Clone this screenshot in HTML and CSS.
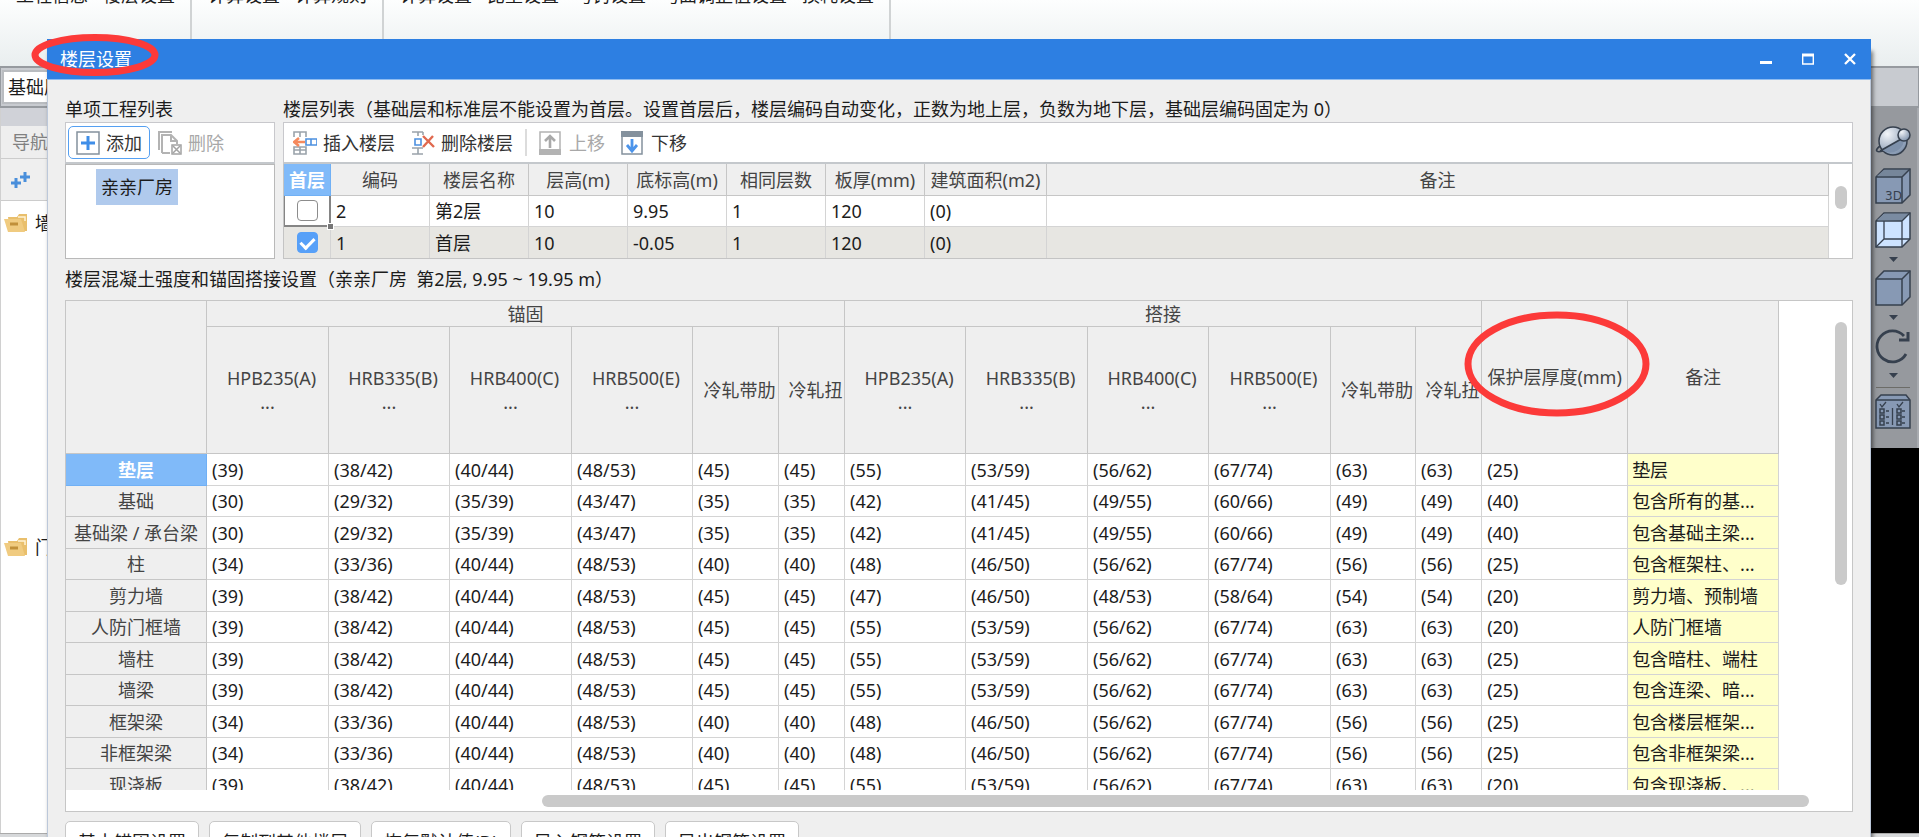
FILE: index.html
```html
<!DOCTYPE html>
<html lang="zh-CN">
<head>
<meta charset="utf-8">
<title>楼层设置</title>
<link rel="stylesheet" href="styles.css">
</head>
<body>
<div class="app">
  <header class="ribbon">
    <div class="ribbon-group"><span>工程信息</span><span>楼层设置</span></div>
    <div class="ribbon-group"><span>计算设置</span><span>计算规则</span></div>
    <div class="ribbon-group"><span>计算设置</span><span>比重设置</span><span>弯钩设置</span><span>弯曲调整值设置</span><span>损耗设置</span></div>
  </header>
  <div class="floor-bar"><button class="floor-select" type="button">基础层</button></div>
  <main class="workspace">
    <aside class="nav">
      <div class="nav-strip"></div>
      <div class="nav-title">导航树</div>
      <div class="nav-tools">
        <svg width="20" height="18" viewBox="0 0 20 18"><path d="M5 7v10M0 12h10M14 1v10M9 6h10" stroke="#4a8fdb" stroke-width="3" fill="none"/></svg>
      </div>
      <div class="nav-tree">
        <div class="nav-item"><svg width="24" height="18" viewBox="0 0 24 18"><path d="M4 3h9l2-3h8v17H6z" fill="#e9bf6c"/><path d="M14 3h7v4" stroke="#fff3d4" stroke-width="1.5" fill="none"/><path d="M0 5h17l4 13H4z" fill="#f0cb80"/><path d="M6 10h8" stroke="#c1903a" stroke-width="3"/></svg><span>墙</span></div>
        <div class="nav-item"><svg width="24" height="18" viewBox="0 0 24 18"><path d="M4 3h9l2-3h8v17H6z" fill="#e9bf6c"/><path d="M14 3h7v4" stroke="#fff3d4" stroke-width="1.5" fill="none"/><path d="M0 5h17l4 13H4z" fill="#f0cb80"/><path d="M6 10h8" stroke="#c1903a" stroke-width="3"/></svg><span>门</span></div>
      </div>
    </aside>
    <aside class="view-tools">
      <svg width="36" height="30" viewBox="0 0 36 30"><defs><radialGradient id="ball" cx=".3" cy=".25" r=".8"><stop offset="0" stop-color="#f2f5f9"/><stop offset="1" stop-color="#8093ad"/></radialGradient></defs><circle cx="18" cy="15" r="14" fill="url(#ball)" stroke="#36404e" stroke-width="1.5"/><path d="M7 24L29 11a14 14 0 0 1-22 13z" fill="#7e91ab"/><path d="M5 25L28 12M5 20c-5 4-5 7 3 5" fill="none" stroke="#36404e" stroke-width="1.7"/><circle cx="29" cy="9" r="6" fill="url(#ball)" stroke="#36404e" stroke-width="1.5"/></svg>
      <svg class="mt12" width="36" height="36" viewBox="0 0 36 36"><path d="M1 9L9 1h26v26l-8 8H1z" fill="#8799b4" stroke="#36404e" stroke-width="1.5"/><path d="M2 8L9 2h25l-7 7z" fill="#76869a"/><path d="M1 9h26v26M27 9l8-8" fill="none" stroke="#36404e" stroke-width="1.5"/><text class="cube-text" x="10" y="32">3D</text></svg>
      <svg class="mt8" width="36" height="36" viewBox="0 0 36 36"><path d="M1 9L9 1h26v26l-8 8H1z" fill="#cde3ff" stroke="#36404e" stroke-width="1.5"/><path d="M2 8L9 2h25l-7 7z" fill="#7a8ba1"/><path d="M1 9h26v26M27 9l8-8M9 9v18h18M9 27l-8 8M27 27l8 0" fill="none" stroke="#36404e" stroke-width="1.3"/></svg>
      <svg class="arrow" width="9" height="5" viewBox="0 0 9 5"><path d="M0 0h9L4.500 5z" fill="#36404e"/></svg>
      <svg class="mt8" width="36" height="36" viewBox="0 0 36 36"><path d="M1 9L9 1h26v26l-8 8H1z" fill="#8799b4" stroke="#36404e" stroke-width="1.5"/><path d="M1 9h26v26M27 9l8-8" fill="none" stroke="#36404e" stroke-width="1.5"/></svg>
      <svg class="arrow" width="9" height="5" viewBox="0 0 9 5"><path d="M0 0h9L4.500 5z" fill="#36404e"/></svg>
      <svg class="mt8" width="36" height="36" viewBox="0 0 36 36"><path d="M31 26A15.500 15.500 0 1 1 29 8" fill="none" stroke="#36404e" stroke-width="2.800"/><path d="M24 12h9V4" fill="none" stroke="#36404e" stroke-width="3"/></svg>
      <svg class="arrow" width="9" height="5" viewBox="0 0 9 5"><path d="M0 0h9L4.500 5z" fill="#36404e"/></svg>
      <div class="tool-rule"></div>
      <svg width="36" height="36" viewBox="0 0 36 36"><path d="M1 6l5-5h25l4 5v28H1z" fill="#8799b4" stroke="#36404e" stroke-width="1.5"/><path d="M1 6h34M17.500 14v17M5 10l2 3 4-5M22 10l2 3 4-5M11 17h3M11 23h3M11 29h3M27 17h3M27 23h3M27 29h3" fill="none" stroke="#36404e" stroke-width="1.3"/><path d="M5 15h4v4H5zM5 21h4v4H5zM5 27h4v4H5zM22 15h4v4h-4zM22 21h4v4h-4zM22 27h4v4h-4z" fill="none" stroke="#36404e" stroke-width="1.5"/></svg>
    </aside>
  </main>
  <footer class="status"></footer>
</div>

<section class="dialog">
  <div class="titlebar">
    <h1 class="title">楼层设置</h1>
    <div class="win-controls">
      <button type="button" aria-label="最小化"><svg width="12" height="12" viewBox="0 0 12 12"><path d="M0 9.500h12" stroke="#fff" stroke-width="3"/></svg></button>
      <button type="button" aria-label="最大化"><svg width="12" height="12" viewBox="0 0 12 12"><path d="M.7 2v9h10.600V2" fill="none" stroke="#fff" stroke-width="1.400"/><path d="M0 2h12" stroke="#fff" stroke-width="3"/></svg></button>
      <button type="button" aria-label="关闭"><svg width="12" height="12" viewBox="0 0 12 12"><path d="M1 1l10 10M11 1L1 11" stroke="#fff" stroke-width="2.300"/></svg></button>
    </div>
  </div>

  <div class="dialog-body">
    <div class="top-row">
      <div class="projects">
        <h2 class="caption">单项工程列表</h2>
        <div class="toolbar">
          <button class="tool primary" type="button"><svg width="24" height="24" viewBox="0 0 24 24"><rect x="1" y="1" width="22" height="22" fill="#fff" stroke="#84919d" stroke-width="1.500"/><path d="M12 5v14M5 12h14" stroke="#3f8ee8" stroke-width="3"/></svg>添加</button>
          <button class="tool" type="button" disabled><svg width="24" height="24" viewBox="0 0 24 24"><path d="M1 19V1h13M4 22V4h9l6 6v3M13 4v6h6M4 22h8" fill="none" stroke="#b3b3b3" stroke-width="2"/><rect x="14" y="14" width="9" height="9" fill="#fff" stroke="#a3a3a3" stroke-width="1.500"/><path d="M15 15l7 7M22 15l-7 7" stroke="#a3a3a3" stroke-width="1.500"/></svg>删除</button>
        </div>
        <div class="project-list"><span class="project">亲亲厂房</span></div>
      </div>

      <div class="floors">
        <h2 class="caption">楼层列表（基础层和标准层不能设置为首层。设置首层后，楼层编码自动变化，正数为地上层，负数为地下层，基础层编码固定为 0）</h2>
        <div class="toolbar">
          <button class="tool" type="button"><svg width="24" height="24" viewBox="0 0 24 24"><path d="M1 6V1h12v5M7 1v5M1 16v7h12v-7zM7 16v7M1 19h12" fill="none" stroke="#9aa3ab" stroke-width="1.600"/><path d="M13 8h11v6H13zM18 8v6" fill="none" stroke="#4c90e0" stroke-width="1.600"/><path d="M12 11H3M6 7l-5 4 5 4" fill="none" stroke="#f58a5e" stroke-width="2.600"/></svg>插入楼层</button>
          <button class="tool" type="button"><svg width="24" height="24" viewBox="0 0 24 24"><path d="M1 1h11M7 1v4M12 1v3M1 23h11M1 17h11M7 17v6" fill="none" stroke="#9aa3ab" stroke-width="1.600"/><path d="M10 8H4v6h6z" fill="none" stroke="#4c90e0" stroke-width="1.600"/><path d="M12 5l11 11M22 5L12 16" stroke="#e0694f" stroke-width="2.400"/></svg>删除楼层</button>
          <span class="divider"></span>
          <button class="tool" type="button" disabled><svg width="24" height="24" viewBox="0 0 24 24"><rect x="1" y="1" width="20" height="22" fill="#fff" stroke="#b3b3b3" stroke-width="1.500"/><path d="M0 18h22v6H0z" fill="#b3b3b3"/><path d="M11 17V5M6 10l5-5 5 5" fill="none" stroke="#a9a9a9" stroke-width="2.600"/></svg>上移</button>
          <button class="tool" type="button"><svg width="24" height="24" viewBox="0 0 24 24"><rect x="1" y="1" width="20" height="22" fill="#fff" stroke="#84919d" stroke-width="1.500"/><path d="M0 0h22v6H0z" fill="#84919d"/><path d="M11 8v11M6 14l5 6 5-6" fill="none" stroke="#4c94ea" stroke-width="2.800"/></svg>下移</button>
        </div>
        <div class="floor-pane">
          <table class="floor-table">
            <colgroup><col class="c-first"><col class="c-std"><col class="c-std"><col class="c-std"><col class="c-std"><col class="c-std"><col class="c-std"><col class="c-area"><col></colgroup>
            <thead><tr><th class="sel">首层</th><th>编码</th><th>楼层名称</th><th>层高(m)</th><th>底标高(m)</th><th>相同层数</th><th>板厚(mm)</th><th>建筑面积(m2)</th><th>备注</th></tr></thead>
            <tbody>
              <tr><td class="check focus"><input type="checkbox" aria-label="第2层设为首层"><i class="handle"></i></td><td>2</td><td>第2层</td><td>10</td><td>9.95</td><td>1</td><td>120</td><td>(0)</td><td></td></tr>
              <tr class="alt"><td class="check"><input type="checkbox" checked aria-label="首层设为首层"></td><td>1</td><td>首层</td><td>10</td><td>-0.05</td><td>1</td><td>120</td><td>(0)</td><td></td></tr>
            </tbody>
          </table>
          <div class="v-track"><div class="thumb"></div></div>
        </div>
      </div>
    </div>

    <h2 class="caption settings-caption">楼层混凝土强度和锚固搭接设置（亲亲厂房&nbsp; 第2层, 9.95 ~ 19.95 m）</h2>
    <div class="settings">
      <div class="settings-view">
        <table class="grid">
          <colgroup><col class="g-name"><col class="g-w"><col class="g-n"><col class="g-w"><col class="g-n"><col class="g-rib"><col class="g-tw"><col class="g-n"><col class="g-w"><col class="g-n"><col class="g-w"><col class="g-rib2"><col class="g-tw"><col class="g-cover"><col class="g-note"></colgroup>
          <thead>
            <tr class="h1"><th rowspan="2"></th><th colspan="6">锚固</th><th colspan="6">搭接</th><th rowspan="2">保护层厚度(mm)</th><th rowspan="2">备注</th></tr>
            <tr class="h2"><th><span class="steel">HPB235(A)</span>...</th><th><span class="steel">HRB335(B)</span>...</th><th><span class="steel">HRB400(C)</span>...</th><th><span class="steel">HRB500(E)</span>...</th><th><span class="steel">冷轧带肋</span></th><th><span class="steel">冷轧扭</span></th><th><span class="steel">HPB235(A)</span>...</th><th><span class="steel">HRB335(B)</span>...</th><th><span class="steel">HRB400(C)</span>...</th><th><span class="steel">HRB500(E)</span>...</th><th><span class="steel">冷轧带肋</span></th><th><span class="steel">冷轧扭</span></th></tr>
          </thead>
          <tbody>
            <tr><th class="sel">垫层</th><td>(39)</td><td>(38/42)</td><td>(40/44)</td><td>(48/53)</td><td>(45)</td><td>(45)</td><td>(55)</td><td>(53/59)</td><td>(56/62)</td><td>(67/74)</td><td>(63)</td><td>(63)</td><td>(25)</td><td>垫层</td></tr>
            <tr><th>基础</th><td>(30)</td><td>(29/32)</td><td>(35/39)</td><td>(43/47)</td><td>(35)</td><td>(35)</td><td>(42)</td><td>(41/45)</td><td>(49/55)</td><td>(60/66)</td><td>(49)</td><td>(49)</td><td>(40)</td><td>包含所有的基...</td></tr>
            <tr><th>基础梁 / 承台梁</th><td>(30)</td><td>(29/32)</td><td>(35/39)</td><td>(43/47)</td><td>(35)</td><td>(35)</td><td>(42)</td><td>(41/45)</td><td>(49/55)</td><td>(60/66)</td><td>(49)</td><td>(49)</td><td>(40)</td><td>包含基础主梁...</td></tr>
            <tr><th>柱</th><td>(34)</td><td>(33/36)</td><td>(40/44)</td><td>(48/53)</td><td>(40)</td><td>(40)</td><td>(48)</td><td>(46/50)</td><td>(56/62)</td><td>(67/74)</td><td>(56)</td><td>(56)</td><td>(25)</td><td>包含框架柱、...</td></tr>
            <tr><th>剪力墙</th><td>(39)</td><td>(38/42)</td><td>(40/44)</td><td>(48/53)</td><td>(45)</td><td>(45)</td><td>(47)</td><td>(46/50)</td><td>(48/53)</td><td>(58/64)</td><td>(54)</td><td>(54)</td><td>(20)</td><td>剪力墙、预制墙</td></tr>
            <tr><th>人防门框墙</th><td>(39)</td><td>(38/42)</td><td>(40/44)</td><td>(48/53)</td><td>(45)</td><td>(45)</td><td>(55)</td><td>(53/59)</td><td>(56/62)</td><td>(67/74)</td><td>(63)</td><td>(63)</td><td>(20)</td><td>人防门框墙</td></tr>
            <tr><th>墙柱</th><td>(39)</td><td>(38/42)</td><td>(40/44)</td><td>(48/53)</td><td>(45)</td><td>(45)</td><td>(55)</td><td>(53/59)</td><td>(56/62)</td><td>(67/74)</td><td>(63)</td><td>(63)</td><td>(25)</td><td>包含暗柱、端柱</td></tr>
            <tr><th>墙梁</th><td>(39)</td><td>(38/42)</td><td>(40/44)</td><td>(48/53)</td><td>(45)</td><td>(45)</td><td>(55)</td><td>(53/59)</td><td>(56/62)</td><td>(67/74)</td><td>(63)</td><td>(63)</td><td>(25)</td><td>包含连梁、暗...</td></tr>
            <tr><th>框架梁</th><td>(34)</td><td>(33/36)</td><td>(40/44)</td><td>(48/53)</td><td>(40)</td><td>(40)</td><td>(48)</td><td>(46/50)</td><td>(56/62)</td><td>(67/74)</td><td>(56)</td><td>(56)</td><td>(25)</td><td>包含楼层框架...</td></tr>
            <tr><th>非框架梁</th><td>(34)</td><td>(33/36)</td><td>(40/44)</td><td>(48/53)</td><td>(40)</td><td>(40)</td><td>(48)</td><td>(46/50)</td><td>(56/62)</td><td>(67/74)</td><td>(56)</td><td>(56)</td><td>(25)</td><td>包含非框架梁...</td></tr>
            <tr><th>现浇板</th><td>(39)</td><td>(38/42)</td><td>(40/44)</td><td>(48/53)</td><td>(45)</td><td>(45)</td><td>(55)</td><td>(53/59)</td><td>(56/62)</td><td>(67/74)</td><td>(63)</td><td>(63)</td><td>(20)</td><td>包含现浇板、...</td></tr>
          </tbody>
        </table>
        <div class="v-track tall"><div class="thumb"></div></div>
      </div>
      <div class="h-track"><div class="thumb"></div></div>
    </div>

    <div class="actions">
      <button type="button">基本锚固设置</button>
      <button type="button">复制到其他楼层</button>
      <button type="button">恢复默认值(D)</button>
      <button type="button">导入钢筋设置</button>
      <button type="button">导出钢筋设置</button>
    </div>
  </div>
</section>

<svg class="mark mark-title" width="128" height="44" viewBox="0 0 128 44"><ellipse cx="64" cy="22" rx="60" ry="17.500"/></svg>
<svg class="mark mark-cover" width="186" height="106" viewBox="0 0 186 106"><ellipse cx="93" cy="53" rx="89" ry="49"/></svg>
</body>
</html>
```
FILE: styles.css
```css
* { box-sizing: border-box; }

body {
  margin: 0;
  height: 100vh;
  position: relative;
  overflow: hidden;
  font: 18px/24px "Noto Sans", "Noto Sans CJK SC", sans-serif;
  color: #1c1c1c;
}

button { font: inherit; color: inherit; }
svg { display: block; flex: none; }
h1, h2 { margin: 0; font-size: 18px; font-weight: 400; }

/* Main window behind the dialog */
.app { height: 100%; display: flex; flex-direction: column; background: #fff; }

.ribbon {
  flex: none;
  display: flex;
  height: 66px;
  overflow: hidden;
  background: linear-gradient(#fdfefe, #e9eeef);
}
.ribbon-group {
  display: flex;
  gap: 15px;
  padding: 0 15px 0 16px;
  border-right: 2px solid #d0d3d4;
  white-space: nowrap;
}
.ribbon-group span { margin-top: -17px; }

.floor-bar {
  flex: none;
  height: 42px;
  padding: 2px 1px;
  border: 2px solid #969a9f;
  border-width: 2px 1px;
  background: #c8cbd0;
}
.floor-select {
  width: 160px;
  height: 34px;
  padding: 0 4px;
  border: 2px solid #b9bcc0;
  background: #fff;
  text-align: left;
}

.workspace { flex: 1; display: flex; justify-content: space-between; background: #000; }

.nav { width: 200px; display: flex; flex-direction: column; background: #fff; border-left: 1px solid #d0d0d0; }
.nav-strip { height: 18px; background: #d0d2d8; }
.nav-title { height: 33px; padding: 4px 11px; background: #eee; color: #808080; border-bottom: 1px solid #ccc; }
.nav-tools { height: 42px; padding: 12px 10px; background: #efefef; border-bottom: 1px solid #ccc; }
.nav-tree { display: flex; flex-direction: column; gap: 300px; padding: 10px 3px; }
.nav-item { display: flex; align-items: center; gap: 7px; }

.view-tools {
  align-self: flex-start;
  display: flex;
  flex-direction: column;
  align-items: center;
  width: 60px;
  padding: 18px 6px 18px 16px;
  border-right: 2px solid #a8abb0;
  background: #96999e;
}
.mt12 { margin-top: 12px; }
.mt8 { margin-top: 8px; }
.arrow { margin-top: 9px; }
.tool-rule { width: 34px; height: 1px; margin: 9px 0 6px; background: #6c6c68; }
.cube-text { font: 12px "DejaVu Sans", sans-serif; fill: #36404e; }

.status { flex: none; height: 4px; background: #d6d8da; border-top: 1px solid #aaa; }

/* Dialog window */
.dialog {
  position: absolute;
  top: 39px;
  left: 47px;
  right: 48px;
  background: #efefef;
  box-shadow: 2px 12px 4px rgba(0, 0, 0, .5);
}
.titlebar {
  display: flex;
  align-items: center;
  justify-content: space-between;
  height: 41px;
  padding: 0 15px 0 13px;
  border-bottom: 1px solid #8fbcf0;
  background: #2d7fe2;
  color: #fff;
}
.win-controls { display: flex; gap: 30px; }
.win-controls button { padding: 0; border: 0; background: none; }

.dialog-body { padding: 16px 17px 20px; border: 1px solid #bcc8da; border-width: 0 1px; }
.caption { height: 26px; line-height: 26px; white-space: nowrap; }

.top-row { display: flex; gap: 8px; }
.projects { flex: none; width: 210px; display: flex; flex-direction: column; }
.floors { flex: 1; min-width: 0; }

.toolbar {
  display: flex;
  align-items: center;
  gap: 2px;
  height: 42px;
  padding: 0 2px;
  border: 1px solid #c8c8cc;
  border-bottom: 2px solid #c4c8cc;
  background: #fff;
}
.tool {
  display: flex;
  align-items: center;
  gap: 6px;
  height: 33px;
  padding: 0 6px;
  border: 1px solid transparent;
  border-radius: 5px;
  background: #fff;
  color: #333;
  white-space: nowrap;
}
.tool:disabled { color: #a8a8a8; }
.tool.primary { border-color: #55a0f2; }
.projects .toolbar { gap: 0; }
.projects .tool { padding: 0 7px; }
.divider { width: 2px; height: 27px; margin: 0 3px; background: #dcdcdc; }

.project-list { flex: 1; padding: 4px 30px; border: 1px solid #b9b9b9; background: #fff; }
.project { display: inline-block; padding: 6px 5px; background: #b0caed; }

.floor-pane { display: flex; border: 1px solid #c4c4c4; border-top: 0; background: #fff; }

table { border-collapse: separate; border-spacing: 0; table-layout: fixed; }
th, td {
  padding: 0 5px;
  overflow: hidden;
  border: 1px solid #d4d4d4;
  border-width: 0 1px 1px 0;
  font-weight: 400;
  white-space: nowrap;
  text-align: left;
}
th { padding: 0; text-align: center; background: #efefef; color: #444; border-color: #c6c6c6; }
th.sel { background: #80baf9; color: #fff; font-weight: 700; border-color: #70b0f5; }

.floor-table { flex: 1; width: 0; }
.floor-table th { height: 32px; }
.floor-table td { height: 31px; }
.c-first { width: 47px; }
.c-std { width: 99px; }
.c-area { width: 122px; }
.alt td { background: #e7e6e2; }
.floor-table tr:last-child td { border-bottom: 0; }
.floor-table .check { position: relative; padding: 0; overflow: visible; text-align: center; }
.floor-table .focus { border: 2px solid #858585; border-width: 0 2px 2px 1px; }
.check input {
  appearance: none;
  display: block;
  width: 21px;
  height: 21px;
  margin: 0 auto;
  border: 1px solid #8c8c8c;
  border-radius: 4px;
  background: #fff;
}
.check input:checked {
  border-color: #57a0f8;
  background: #57a0f8;
}
.check input:checked::before {
  content: "";
  display: block;
  width: 6px;
  height: 11px;
  margin: 2px auto 0;
  border: solid #fff;
  border-width: 0 3px 3px 0;
  transform: rotate(45deg);
}
.handle { position: absolute; z-index: 1; right: -5px; bottom: -5px; width: 7px; height: 7px; border: 1px solid #fff; background: #777; }

.v-track { flex: none; width: 23px; padding: 22px 5px 0 6px; }
.thumb { height: 23px; border-radius: 6px; background: #cacaca; }

.settings-caption { margin: 7px 0 8px; }
.settings { border: 1px solid #c6c6c6; background: #fff; }
.settings-view { display: flex; justify-content: space-between; height: 489px; overflow: hidden; }
.tall { padding-top: 21px; }
.tall .thumb { height: 263px; }
.h-track { height: 21px; padding: 5px 43px 4px 476px; }
.h-track .thumb { height: 12px; }

.grid { width: 1712px; flex: none; align-self: flex-start; }
.g-name { width: 141px; }
.g-w { width: 122px; }
.g-n { width: 121px; }
.g-rib { width: 86px; }
.g-rib2 { width: 85px; }
.g-tw { width: 66px; }
.g-cover { width: 146px; }
.g-note { width: 151px; }
.h1 th { height: 26px; }
.h2 th { height: 127px; }
.steel { display: block; padding-left: 8px; }
.grid tbody th, .grid tbody td { height: 32px; }
.grid tbody tr:nth-child(even) th, .grid tbody tr:nth-child(even) td { height: 31px; }
.grid td:last-child { padding-left: 4px; background: #ffffcb; }

.actions { display: flex; gap: 10px; margin-top: 9px; }
.actions button {
  height: 41px;
  padding: 0 12px;
  border: 1px solid #c8c8c8;
  border-radius: 5px;
  background: #fff;
}

/* Red highlight rings */
.mark { position: absolute; pointer-events: none; }
.mark ellipse { fill: none; stroke: #fc3a39; stroke-width: 7px; }
.mark-title { left: 31px; top: 33px; }
.mark-cover { left: 1464px; top: 311px; }
```
